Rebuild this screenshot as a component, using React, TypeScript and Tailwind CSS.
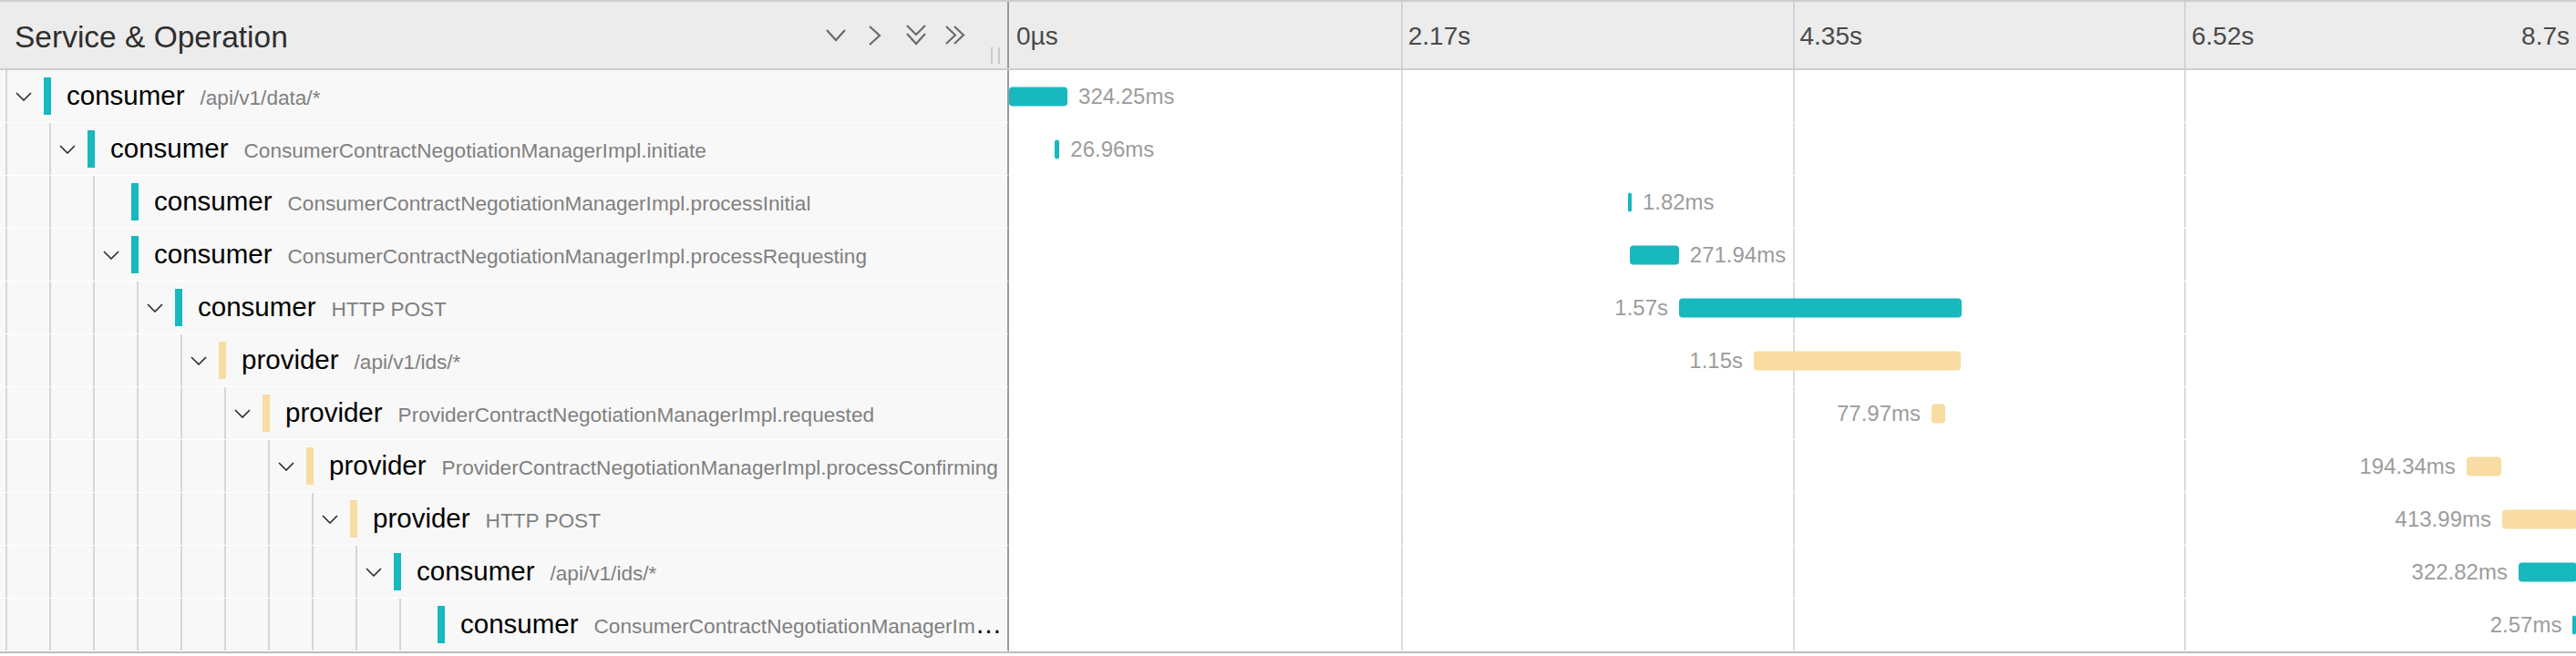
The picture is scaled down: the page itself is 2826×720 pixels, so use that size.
import React from "react";

// trace ends at 8.7s, timeline is scaled against it
const TOTAL_MS = 8700;

type SpanRow = {
  svc: "consumer" | "provider";
  op: string;
  depth: number;
  open: boolean;
  start: number;
  dur: number;
  label: string;
  labelLeft?: boolean;
};

const rows: SpanRow[] = [
  { svc: "consumer", op: "/api/v1/data/*", depth: 0, open: true, start: 0, dur: 324.25, label: "324.25ms" },
  { svc: "consumer", op: "ConsumerContractNegotiationManagerImpl.initiate", depth: 1, open: true, start: 253, dur: 26.96, label: "26.96ms" },
  { svc: "consumer", op: "ConsumerContractNegotiationManagerImpl.processInitial", depth: 2, open: false, start: 3436, dur: 1.82, label: "1.82ms" },
  { svc: "consumer", op: "ConsumerContractNegotiationManagerImpl.processRequesting", depth: 2, open: true, start: 3447, dur: 271.94, label: "271.94ms" },
  { svc: "consumer", op: "HTTP POST", depth: 3, open: true, start: 3720, dur: 1570, label: "1.57s", labelLeft: true },
  { svc: "provider", op: "/api/v1/ids/*", depth: 4, open: true, start: 4135, dur: 1150, label: "1.15s", labelLeft: true },
  { svc: "provider", op: "ProviderContractNegotiationManagerImpl.requested", depth: 5, open: true, start: 5122, dur: 77.97, label: "77.97ms", labelLeft: true },
  { svc: "provider", op: "ProviderContractNegotiationManagerImpl.processConfirming", depth: 6, open: true, start: 8092, dur: 194.34, label: "194.34ms", labelLeft: true },
  { svc: "provider", op: "HTTP POST", depth: 7, open: true, start: 8290, dur: 413.99, label: "413.99ms", labelLeft: true },
  { svc: "consumer", op: "/api/v1/ids/*", depth: 8, open: true, start: 8381, dur: 322.82, label: "322.82ms", labelLeft: true },
  { svc: "consumer", op: "ConsumerContractNegotiationManagerImpl.processRequested", depth: 9, open: false, start: 8682, dur: 2.57, label: "2.57ms", labelLeft: true },
];

function RowChevron() {
  return (
    <svg width="18" height="10" viewBox="0 0 18 10" fill="none" stroke="#2a2a2a" strokeWidth="1.6">
      <polyline points="1,1 9,9 17,1" />
    </svg>
  );
}

function HeaderIcons() {
  const s = { fill: "none", stroke: "#6b6b6b", strokeWidth: 2.2 };
  return (
    <div className="flex items-center">
      <svg width="22" height="14" viewBox="0 0 22 14" {...s}>
        <polyline points="1,1 11,12 21,1" />
      </svg>
      <svg className="ml-[25px]" width="14" height="22" viewBox="0 0 14 22" {...s}>
        <polyline points="1,1 12,11 1,21" />
      </svg>
      <svg className="ml-[27px]" width="22" height="23" viewBox="0 0 22 23" {...s}>
        <polyline points="1,1 11,11 21,1" />
        <polyline points="1,10 11,21 21,10" />
      </svg>
      <svg className="ml-[21px]" width="22" height="21" viewBox="0 0 22 21" {...s}>
        <polyline points="1,1 11,10.5 1,20" />
        <polyline points="10,1 20,10.5 10,20" />
      </svg>
    </div>
  );
}

function TickLines({ color }: { color: string }) {
  return (
    <>
      <div className={`absolute top-0 bottom-0 left-1/4 w-[2px] ${color}`} />
      <div className={`absolute top-0 bottom-0 left-1/2 w-[2px] ${color}`} />
      <div className={`absolute top-0 bottom-0 left-3/4 w-[2px] ${color}`} />
    </>
  );
}

function Header() {
  return (
    <div className="flex h-[77px] border-t-2 border-b-2 border-[#cdcdcd] bg-[#ececec]">
      <div className="relative flex w-[1107px] shrink-0 items-center border-r-2 border-r-[#999] pl-[16px] pr-[46px]">
        <div className="mt-[6px] text-[33.5px] text-[#2e2e2e]">Service &amp; Operation</div>
        <div className="flex-1" />
        <HeaderIcons />
        {/* resize grip */}
        <div className="absolute right-[8px] bottom-[5px] flex gap-[6px]">
          <div className="h-[18px] w-[2px] bg-[#c9c9c9]" />
          <div className="h-[18px] w-[2px] bg-[#c9c9c9]" />
        </div>
      </div>
      <div className="relative flex-1 text-[28px] leading-[32px] text-[#4a4a4a]">
        <TickLines color="bg-[#d3d3d3]" />
        <span className="absolute top-[22px] left-[8px]">0µs</span>
        <span className="absolute top-[22px] left-1/4 ml-[8px]">2.17s</span>
        <span className="absolute top-[22px] left-1/2 ml-[8px]">4.35s</span>
        <span className="absolute top-[22px] left-3/4 ml-[8px]">6.52s</span>
        <span className="absolute top-[22px] right-[7px]">8.7s</span>
      </div>
    </div>
  );
}

function TraceRow({ row }: { row: SpanRow }) {
  const color = row.svc === "consumer" ? "bg-[#17b8be]" : "bg-[#f8dca1]";
  const left = (row.start / TOTAL_MS) * 100;
  const width = (row.dur / TOTAL_MS) * 100;

  return (
    <div className="flex h-[58px]">
      {/* name column */}
      <div className="flex w-[1107px] shrink-0 border-r-2 border-b border-r-[#999] border-b-white bg-[#f8f8f8] pl-[6px]">
        {Array.from({ length: row.depth }).map((_, i) => (
          <div key={i} className="w-[48px] shrink-0 border-l-2 border-[#d6d6d6]" />
        ))}
        <div className="flex min-w-0 flex-1 items-center border-l-2 border-[#d6d6d6] pl-[9px] pr-[3px]">
          <div className="flex w-[18px] shrink-0 justify-center">{row.open && <RowChevron />}</div>
          <div className={`ml-[13px] h-[41px] w-[8px] shrink-0 ${color}`} />
          <div className="ml-[17px] min-w-0 truncate text-[29.5px] text-black">
            {row.svc}
            <span className="ml-[17px] text-[22.6px] text-[#808080]">{row.op}</span>
          </div>
        </div>
      </div>

      {/* timeline column */}
      <div className="relative flex-1 overflow-hidden border-b border-white bg-white">
        <TickLines color="bg-[#dcdcdc]" />
        <div
          className={`absolute top-1/2 h-[21px] -translate-y-1/2 rounded-[4px] ${color}`}
          style={{ left: `${left}%`, width: `max(${width}%, 4px)` }}
        >
          <span
            className={`absolute top-1/2 -translate-y-1/2 whitespace-nowrap text-[24px] text-[#9c9c9c] ${
              row.labelLeft ? "right-full mr-[12px]" : "left-full ml-[12px]"
            }`}
          >
            {row.label}
          </span>
        </div>
      </div>
    </div>
  );
}

export default function App() {
  return (
    <div className="h-[720px] w-[2826px] overflow-hidden bg-white font-['Liberation_Sans',Arial,sans-serif]">
      <Header />
      <div className="border-b-2 border-[#bbbbbb]">
        {rows.map((r, i) => (
          <TraceRow key={i} row={r} />
        ))}
      </div>
    </div>
  );
}
